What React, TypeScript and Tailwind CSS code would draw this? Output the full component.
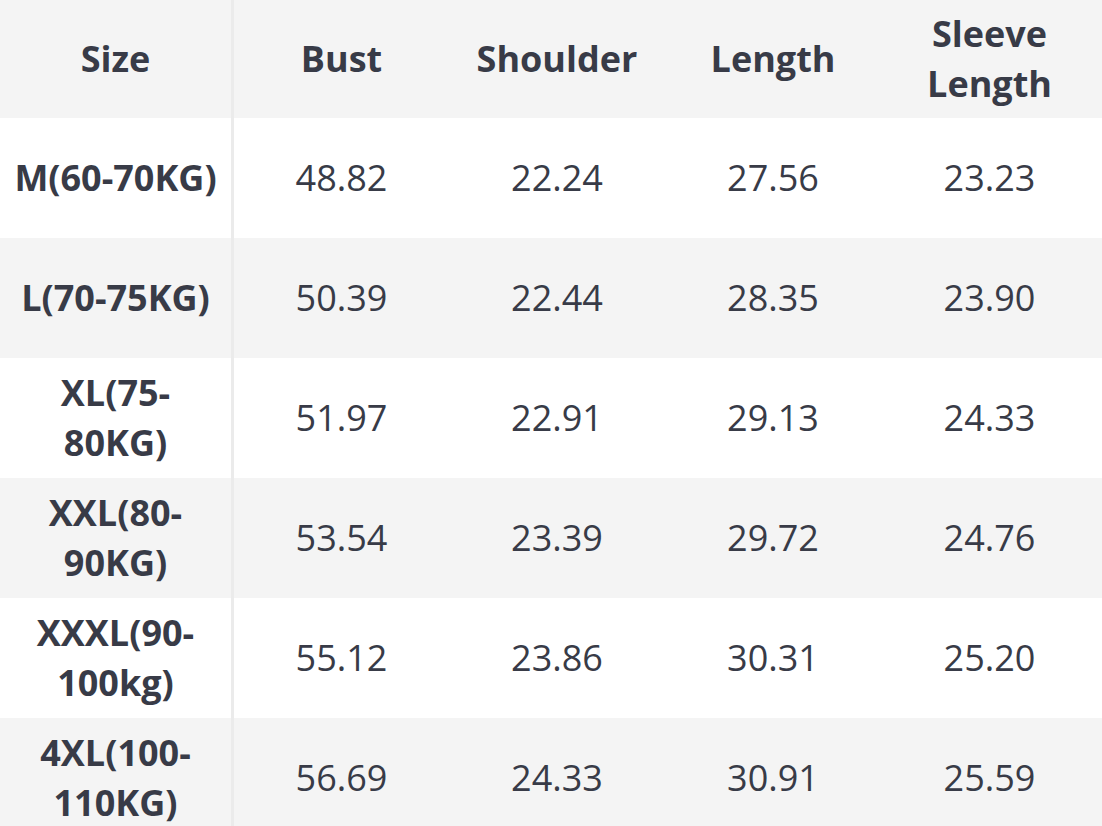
const headers = ["Size", "Bust", "Shoulder", "Length", "Sleeve Length"]

const rows = [
  ["M(60-70KG)", "48.82", "22.24", "27.56", "23.23"],
  ["L(70-75KG)", "50.39", "22.44", "28.35", "23.90"],
  ["XL(75-80KG)", "51.97", "22.91", "29.13", "24.33"],
  ["XXL(80-90KG)", "53.54", "23.39", "29.72", "24.76"],
  ["XXXL(90-100kg)", "55.12", "23.86", "30.31", "25.20"],
  ["4XL(100-110KG)", "56.69", "24.33", "30.91", "25.59"],
]

function cellSide(i: number) {
  if (i === 0) return "px-[12px] border-r-[3px] border-[#ebebeb] font-bold "
  if (i === 4) return "pr-[4px] "
  return ""
}

export default function App() {
  return (
    <div
      className="w-[1102px] h-[826px] overflow-hidden bg-white text-[#383b47]"
      style={{ fontFamily: '"Open Sans", sans-serif' }}
    >
      <div className="grid grid-cols-[234px_215px_216px_216px_1fr] text-[36px] leading-[50px]">
        {headers.map((h, i) => (
          <div
            key={h}
            className={
              "h-[118px] bg-[#f4f4f4] flex items-center justify-center text-center font-bold " +
              cellSide(i)
            }
          >
            {h === "Sleeve Length" ? <span className="w-[140px]">{h}</span> : h}
          </div>
        ))}
        {rows.map((r, ri) =>
          r.map((c, ci) => (
            <div
              key={ri + "-" + ci}
              className={
                "h-[120px] flex items-center justify-center text-center " +
                (ri % 2 === 0 ? "bg-white " : "bg-[#f4f4f4] ") +
                cellSide(ci)
              }
            >
              {c}
            </div>
          ))
        )}
      </div>
    </div>
  )
}
